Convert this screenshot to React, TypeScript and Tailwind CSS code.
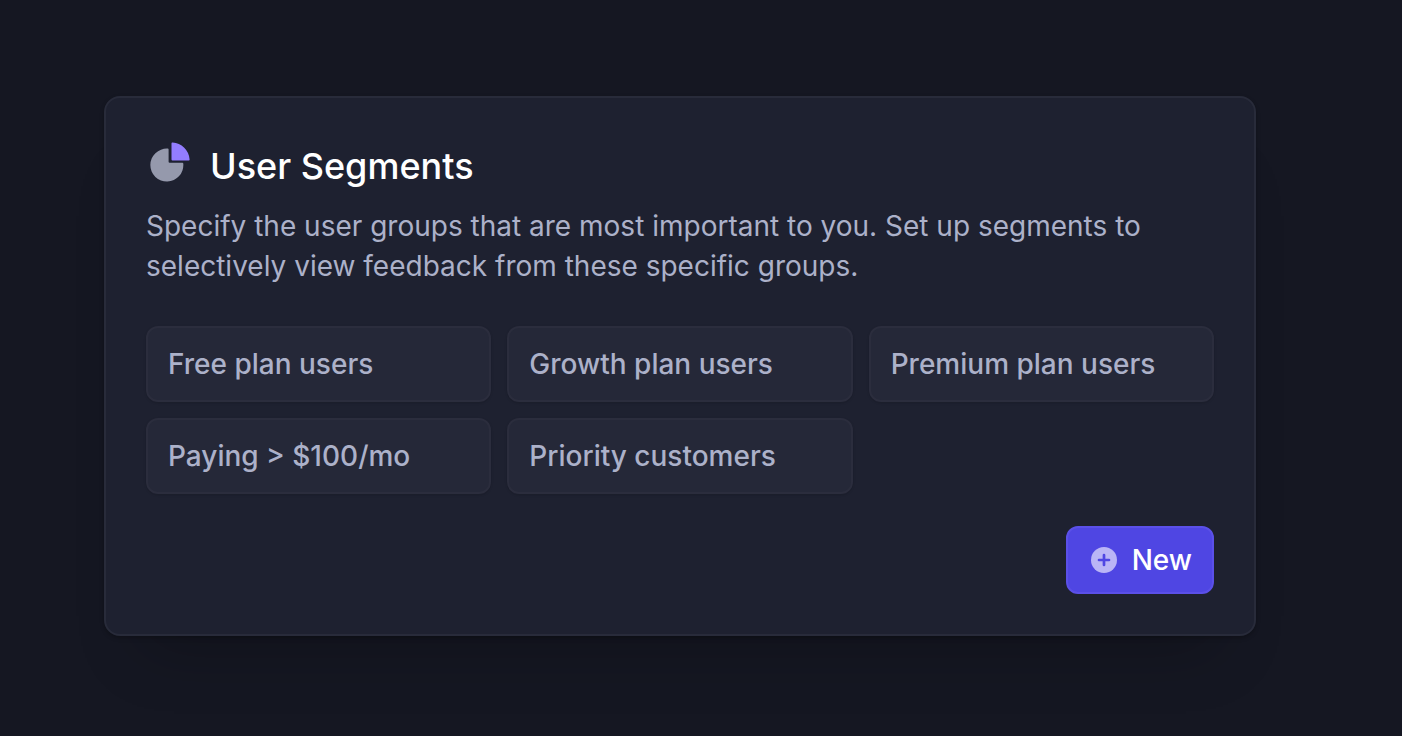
const segments = [
  "Free plan users",
  "Growth plan users",
  "Premium plan users",
  "Paying > $100/mo",
  "Priority customers",
];

export default function App() {
  return (
    <main className="min-h-screen bg-[#151722] py-24 pr-[146px] pl-[104px] font-['Inter',sans-serif] text-[28px] leading-10 text-[#acb1c9]">
      <section
        aria-labelledby="segments-title"
        className="rounded-2xl border-2 border-[#282b3a] bg-[#1e2130] p-10 shadow-[0_2px_4px_rgba(0,0,0,0.25),0_50px_60px_-40px_rgba(0,0,0,0.25)]"
      >
        <div className="flex items-start gap-5 pb-3">
          <PieIcon />
          <h1
            id="segments-title"
            className="text-4xl leading-14 font-medium text-white"
          >
            User Segments
          </h1>
        </div>

        <p>
          Specify the user groups that are most important to you. Set up
          segments to selectively view feedback from these specific groups.
        </p>

        <ul className="mt-10 grid grid-cols-3 gap-4">
          {segments.map((name) => (
            <li
              key={name}
              className="rounded-xl border-2 border-[#2b2d3d] bg-[#252838] px-5 py-4 font-medium shadow-sm"
            >
              {name}
            </li>
          ))}
        </ul>

        <div className="mt-8 flex justify-end">
          <button
            type="button"
            className="flex items-center gap-3 rounded-xl border-2 border-[#5b50e8] bg-[#4f46e3] px-5 py-3 font-medium text-white"
          >
            <PlusIcon />
            New
          </button>
        </div>
      </section>
    </main>
  );
}

function PieIcon() {
  return (
    <svg viewBox="0 0 44 44" className="h-11 w-11" aria-hidden="true">
      <path
        fill="#9599ac"
        d="M22.6 11.7v12.1a1 1 0 0 0 1 1h12.7a1 1 0 0 1 1 1.1A16.5 16.5 0 1 1 21.5 10.6a1 1 0 0 1 1.1 1.1z"
      />
      <path
        fill="#937dff"
        d="M25.5 5.4a.9.9 0 0 1 1-.9A18.2 18.2 0 0 1 43.6 21.4a.9.9 0 0 1-.9 1h-16.2a1 1 0 0 1-1-1z"
      />
    </svg>
  );
}

function PlusIcon() {
  return (
    <svg viewBox="0 0 32 32" className="h-8 w-8" aria-hidden="true">
      <circle cx="16" cy="16" r="13" fill="#bab5f6" />
      <path
        d="M16 11v10M11 16h10"
        stroke="#4f46e3"
        strokeWidth="2.7"
        strokeLinecap="round"
      />
    </svg>
  );
}
